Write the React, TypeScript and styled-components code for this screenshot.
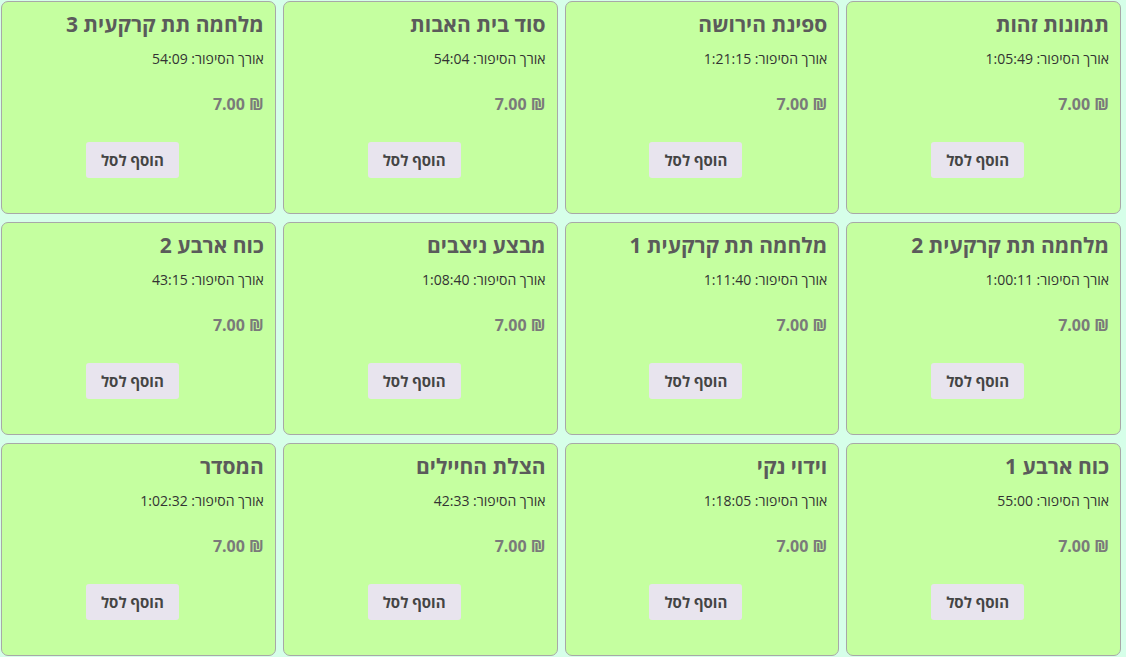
import styled, { createGlobalStyle } from "styled-components";

const GlobalStyle = createGlobalStyle`
  html, body {
    margin: 0;
    padding: 0;
    background: #d6ffe9;
    font-family: "Open Sans", "Liberation Sans", "DejaVu Sans", sans-serif;
  }
`;

const stories = [
  { title: "תמונות זהות", length: "1:05:49" },
  { title: "ספינת הירושה", length: "1:21:15" },
  { title: "סוד בית האבות", length: "54:04" },
  { title: "מלחמה תת קרקעית 3", length: "54:09" },
  { title: "מלחמה תת קרקעית 2", length: "1:00:11" },
  { title: "מלחמה תת קרקעית 1", length: "1:11:40" },
  { title: "מבצע ניצבים", length: "1:08:40" },
  { title: "כוח ארבע 2", length: "43:15" },
  { title: "כוח ארבע 1", length: "55:00" },
  { title: "וידוי נקי", length: "1:18:05" },
  { title: "הצלת החיילים", length: "42:33" },
  { title: "המסדר", length: "1:02:32" },
];

export default function App() {
  return (
    <>
      <GlobalStyle />
      <Grid dir="rtl">
        {stories.map((s) => (
          <Card key={s.title}>
            <Title>{s.title}</Title>
            <Length>אורך הסיפור: {s.length}</Length>
            <Price>₪ 7.00</Price>
            <Actions>
              <AddButton>הוסף לסל</AddButton>
            </Actions>
          </Card>
        ))}
      </Grid>
    </>
  );
}

const Grid = styled.div`
  display: grid;
  grid-template-columns: repeat(4, 1fr);
  column-gap: 7px;
  row-gap: 8px;
  width: 1120px;
  padding: 1px 0 0 1px;
`;

const Card = styled.div`
  box-sizing: border-box;
  height: 213px;
  background: #c5ffa0;
  border: 1px solid #a8a8a8;
  border-radius: 7px;
  padding: 0 11px;
  display: flex;
  flex-direction: column;
  text-align: right;
`;

const Title = styled.h2`
  margin: 8px 0 0;
  font-size: 21px;
  font-weight: 700;
  line-height: 28px;
  color: #5b5b5b;
`;

const Length = styled.div`
  margin-top: 11px;
  font-size: 14px;
  line-height: 19px;
  color: #333;
`;

const Price = styled.div`
  margin-top: 26px;
  font-size: 16px;
  font-weight: 700;
  line-height: 20px;
  color: #7a7a7a;
`;

const Actions = styled.div`
  margin-top: 28px;
  display: flex;
  justify-content: center;
  padding-right: 12px;
`;

const AddButton = styled.button`
  width: 93px;
  height: 36px;
  border: none;
  border-radius: 3px;
  background: #e8e4ee;
  color: #444;
  font-family: inherit;
  font-size: 15px;
  font-weight: 700;
  cursor: pointer;
`;
